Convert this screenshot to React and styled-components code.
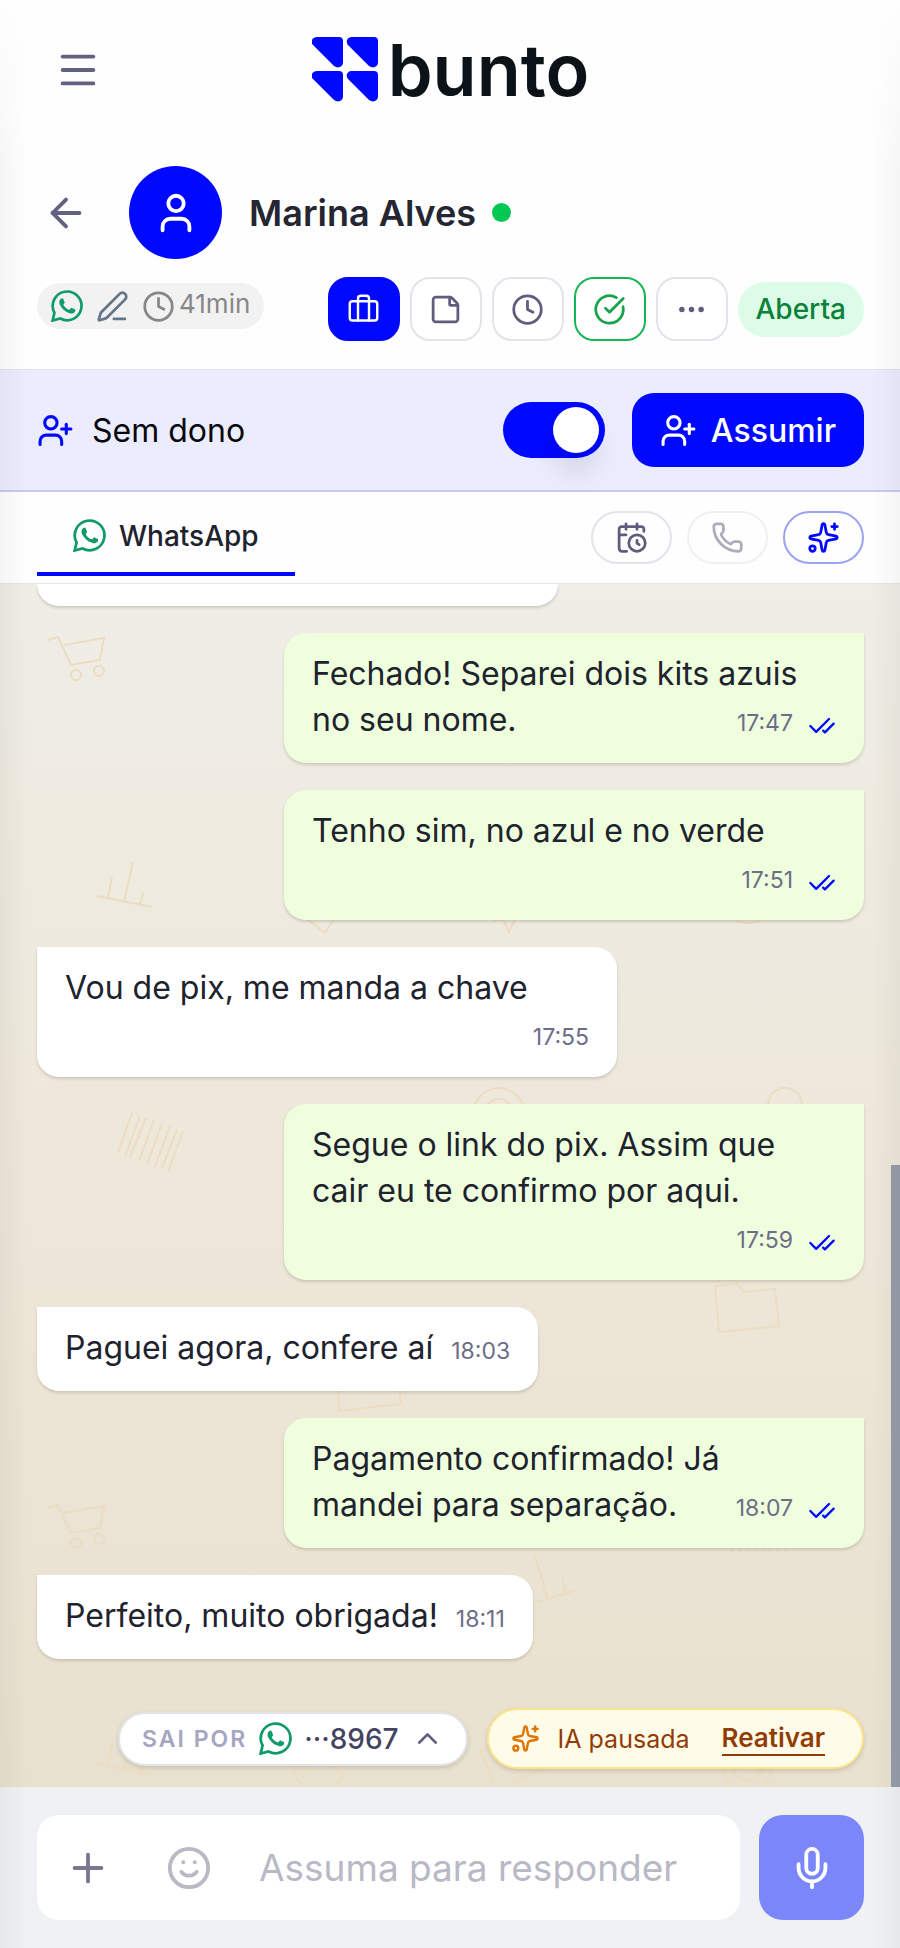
import React, { useState } from "react";
import styled, { createGlobalStyle } from "styled-components";
import {
  ArrowLeft,
  Briefcase,
  CalendarClock,
  CheckCheck,
  ChevronUp,
  CircleCheckBig,
  Clock,
  Ellipsis,
  Menu,
  Mic,
  PenLine,
  Phone,
  Plus,
  Smile,
  Sparkles,
  StickyNote,
  User,
  UserPlus,
} from "lucide-react";

const messages = [
  { id: 1, mine: true, text: "Fechado! Separei dois kits azuis no seu nome.", time: "17:47" },
  { id: 2, mine: true, text: "Tenho sim, no azul e no verde", time: "17:51" },
  { id: 3, mine: false, text: "Vou de pix, me manda a chave", time: "17:55" },
  { id: 4, mine: true, text: "Segue o link do pix. Assim que cair eu te confirmo por aqui.", time: "17:59" },
  { id: 5, mine: false, text: "Paguei agora, confere aí", time: "18:03" },
  { id: 6, mine: true, text: "Pagamento confirmado! Já mandei para separação.", time: "18:07" },
  { id: 7, mine: false, text: "Perfeito, muito obrigada!", time: "18:11" },
];

const WhatsAppIcon = ({ size = 32 }) => (
  <svg width={size} height={size} viewBox="0 0 24 24" fill="none" aria-hidden="true">
    <path
      d="M1.2 22.9 2.6 17.1A10.8 10.8 0 1 1 6.9 21.4Z"
      stroke="currentColor"
      strokeWidth="2"
    />
    <path
      fill="currentColor"
      transform="translate(0.2 0)"
      d="M17.472 14.382c-.297-.149-1.758-.867-2.03-.967-.273-.099-.471-.148-.67.15-.197.297-.767.966-.94 1.164-.173.199-.347.223-.644.075-.297-.15-1.255-.463-2.39-1.475-.883-.788-1.48-1.761-1.653-2.059-.173-.297-.018-.458.13-.606.134-.133.298-.347.446-.52.149-.174.198-.298.298-.497.099-.198.05-.371-.025-.52-.075-.149-.669-1.612-.916-2.207-.242-.579-.487-.5-.669-.51-.173-.008-.371-.01-.57-.01-.198 0-.52.074-.792.372-.272.297-1.04 1.016-1.04 2.479 0 1.462 1.065 2.875 1.213 3.074.149.198 2.096 3.2 5.077 4.487.709.306 1.262.489 1.694.625.712.227 1.36.195 1.871.118.571-.085 1.758-.719 2.006-1.413.248-.694.248-1.289.173-1.413-.074-.124-.272-.198-.57-.347"
    />
  </svg>
);

const LogoMark = () => {
  const leaf =
    "M5 0H27a4 4 0 0 1 4 4V25c0 5-5 7-9 4L1.5 8.5C-2 5 0 0 5 0Z";
  return (
    <svg width="66" height="65" viewBox="0 0 66 65" fill="#0008ff" aria-hidden="true">
      <path d={leaf} />
      <path d={leaf} transform="translate(35 0)" />
      <path d={leaf} transform="translate(0 34)" />
      <path d={leaf} transform="translate(35 34)" />
    </svg>
  );
};

const Cart = ({ y }) => (
  <g transform={`translate(0 ${y})`}>
    <path d="M48 56 58 53 71 81 100 76 104 54 64 61" />
    <circle cx="76" cy="91" r="5" />
    <circle cx="99" cy="87" r="5" />
  </g>
);

const Bars = ({ y }) => (
  <path
    transform={`translate(0 ${y})`}
    d="M97 312 152 323M112 293 108 314M133 278 124 318M144 308 140 320"
  />
);

const Doodles = () => (
  <Pattern viewBox="0 0 900 1203" preserveAspectRatio="xMidYMin slice" aria-hidden="true">
    <Cart y={0} />
    <Cart y={868} />
    <Bars y={0} />
    <Bars y={868} />
    <path d="M307 335 325 349 334 335M493 336 503 336 509 348 515 335" />
    <circle cx="748" cy="314" r="25" />
    <path d="M132 529 118 569M140 532 125 572M146 534 130 573M154 536 139 577M162 540 147 580M170 542 155 583M177 545 162 584M183 547 168 588" />
    <circle cx="499" cy="529" r="25" />
    <circle cx="499" cy="529" r="14" />
    <circle cx="785" cy="521" r="17" />
    <path d="M715 702 737 700 744 708 775 705 779 742 719 748Z" />
    <path d="M338 800 339 827 401 820 399 800" />
    <path d="M732 960v8M740 960v8M747 960v8M755 960v8M763 960v8M770 960v8M778 960v8M786 960v8" />
    <path d="M535 972 548 1015M538 1018 577 1006M562 994 566 1009" />
    <path d="M293 1182 297 1196 306 1203M331 1180 343 1190 335 1203" />
    <circle cx="305" cy="1184" r="4" />
    <path d="M495 1203 480 1167 500 1160M548 1184 518 1195 513 1203" />
    <circle cx="747" cy="1181" r="25" />
    <circle cx="747" cy="1181" r="15" />
  </Pattern>
);

const Message = ({ mine, text, time }) => (
  <Bubble $mine={mine}>
    {text}
    <Stamp>
      <time>{time}</time>
      {mine && <CheckCheck size={28} strokeWidth={2} />}
    </Stamp>
  </Bubble>
);

const App = () => {
  const [unowned, setUnowned] = useState(true);

  return (
    <Page>
      <GlobalStyle />
      <TopBar>
        <IconButton $width="82px" aria-label="Menu">
          <Menu size={46} strokeWidth={2} />
        </IconButton>
        <Logo>
          <LogoMark />
          <span>bunto</span>
        </Logo>
      </TopBar>

      <ContactHeader>
        <ContactRow>
          <IconButton $width="57px" aria-label="Voltar">
            <ArrowLeft size={46} strokeWidth={2} />
          </IconButton>
          <Avatar>
            <User size={46} strokeWidth={2} />
          </Avatar>
          <Name>Marina Alves</Name>
          <OnlineDot />
        </ContactRow>
        <ToolRow>
          <MetaPill>
            <WhatsAppIcon size={32} />
            <PenLine size={33} strokeWidth={2} color="#64748b" />
            <Wait>
              <Clock size={33} strokeWidth={2} />
              <span>41min</span>
            </Wait>
          </MetaPill>
          <Tools>
            <ToolButton $tone="primary" aria-label="Negócio">
              <Briefcase size={33} strokeWidth={1.75} />
            </ToolButton>
            <ToolButton aria-label="Notas">
              <StickyNote size={33} strokeWidth={2} />
            </ToolButton>
            <ToolButton aria-label="Agendar">
              <Clock size={33} strokeWidth={2} />
            </ToolButton>
            <ToolButton $tone="success" aria-label="Resolver">
              <CircleCheckBig size={33} strokeWidth={2} />
            </ToolButton>
            <ToolButton aria-label="Mais">
              <Ellipsis size={33} strokeWidth={2} />
            </ToolButton>
            <Status>Aberta</Status>
          </Tools>
        </ToolRow>
      </ContactHeader>

      <OwnerBar>
        <OwnerLabel htmlFor="owner">
          <UserPlus size={37} strokeWidth={2} />
          <span>Sem dono</span>
        </OwnerLabel>
        <Toggle
          id="owner"
          type="checkbox"
          checked={unowned}
          onChange={(event) => setUnowned(event.target.checked)}
        />
        <AssumeButton>
          <UserPlus size={37} strokeWidth={2} />
          Assumir
        </AssumeButton>
      </OwnerBar>

      <Channels>
        <Tab>
          <WhatsAppIcon size={33} />
          <span>WhatsApp</span>
        </Tab>
        <ChannelActions>
          <RoundButton aria-label="Agenda">
            <CalendarClock size={33} strokeWidth={2} />
          </RoundButton>
          <RoundButton disabled aria-label="Ligar">
            <Phone size={33} strokeWidth={2} />
          </RoundButton>
          <RoundButton $accent aria-label="Assistente">
            <Sparkles size={33} strokeWidth={2} />
          </RoundButton>
        </ChannelActions>
      </Channels>

      <Chat>
        <Doodles />
        <List>
          <BubbleEnd />
          {messages.map((message) => (
            <Message key={message.id} {...message} />
          ))}
        </List>
        <Pills>
          <SenderPill>
            <small>SAI POR</small>
            <WhatsAppIcon size={33} />
            <span>···8967</span>
            <ChevronUp size={33} strokeWidth={2} />
          </SenderPill>
          <PausedPill>
            <Sparkles size={29} strokeWidth={2} />
            <span>IA pausada</span>
            <ResumeButton>Reativar</ResumeButton>
          </PausedPill>
        </Pills>
        <ScrollThumb />
      </Chat>

      <Composer>
        <Field>
          <IconButton $width="101px" $color="#77778f" aria-label="Anexar">
            <Plus size={46} strokeWidth={2} />
          </IconButton>
          <IconButton $width="101px" $color="#b9b9c6" aria-label="Emoji">
            <Smile size={46} strokeWidth={2} />
          </IconButton>
          <TextInput placeholder="Assuma para responder" aria-label="Mensagem" />
        </Field>
        <MicButton aria-label="Gravar áudio">
          <Mic size={46} strokeWidth={2} />
        </MicButton>
      </Composer>
    </Page>
  );
};

export default App;

const GlobalStyle = createGlobalStyle`
  * {
    box-sizing: border-box;
  }
  body {
    margin: 0;
    background: #fefefe;
    color: #20222d;
    font-family: Inter, "Liberation Sans", sans-serif;
  }
  button, input {
    font-family: inherit;
    margin: 0;
  }
  button {
    border: 0;
    padding: 0;
    background: none;
    cursor: pointer;
  }
  svg {
    flex: none;
  }
`;

const Page = styled.main`
  position: relative;
  display: flex;
  flex-direction: column;
  min-height: 100vh;

  /* soft shade along both side edges */
  &::after {
    content: "";
    position: absolute;
    inset: 0;
    pointer-events: none;
    background: linear-gradient(90deg, rgba(20, 20, 10, 0.04), transparent 28px),
      linear-gradient(270deg, rgba(20, 20, 10, 0.04), transparent 28px);
    mask-image: linear-gradient(transparent, #000 180px);
  }
`;

const TopBar = styled.header`
  display: grid;
  grid-template-columns: 1fr auto 1fr;
  align-items: center;
  height: 139px;
  padding: 0 36px 0 37px;
`;

const IconButton = styled.button`
  display: flex;
  flex: none;
  align-items: center;
  justify-content: center;
  width: ${({ $width }) => $width};
  color: ${({ $color }) => $color || "#626180"};
`;

const Logo = styled.div`
  display: flex;
  align-items: center;
  gap: 10px;
  color: #0c1318;
  font-size: 72px;
  font-weight: 600;
  line-height: 72px;
`;

const ContactHeader = styled.section`
  display: flex;
  flex-direction: column;
  gap: 18px;
  padding: 27px 36px 28px 37px;
  border-bottom: 1px solid #e2e3ea;
`;

const ContactRow = styled.div`
  display: flex;
  align-items: center;
`;

const Avatar = styled.div`
  display: flex;
  align-items: center;
  justify-content: center;
  width: 93px;
  height: 93px;
  margin: 0 27px 0 35px;
  border-radius: 50%;
  background: #0008ff;
  color: #fff;
`;

const Name = styled.h1`
  margin: 0;
  color: #262633;
  font-size: 36px;
  font-weight: 600;
  line-height: 46px;
`;

const OnlineDot = styled.span`
  width: 19px;
  height: 19px;
  margin-left: 16px;
  border-radius: 50%;
  background: #00c853;
`;

const ToolRow = styled.div`
  display: flex;
  align-items: center;
  justify-content: space-between;
`;

const MetaPill = styled.div`
  display: flex;
  align-items: center;
  gap: 13px;
  height: 46px;
  margin-bottom: 6px;
  padding: 0 14px;
  border-radius: 23px;
  background: #f2f2f2;
  color: #0f9b68;
`;

const Wait = styled.span`
  display: flex;
  align-items: flex-start;
  gap: 4px;
  color: #878787;
  font-size: 26px;
  line-height: 28px;
`;

const Tools = styled.div`
  display: flex;
  align-items: center;
  gap: 10px;
`;

const tones = {
  primary: { line: "#0008ff", fill: "#0008ff", ink: "#fff" },
  success: { line: "#16b657", fill: "#fff", ink: "#16a34a" },
  neutral: { line: "#e3e4ea", fill: "#fff", ink: "#5f5d7d" },
};

const ToolButton = styled.button`
  display: flex;
  align-items: center;
  justify-content: center;
  width: 72px;
  height: 64px;
  border: 2px solid ${({ $tone = "neutral" }) => tones[$tone].line};
  border-radius: 20px;
  background: ${({ $tone = "neutral" }) => tones[$tone].fill};
  color: ${({ $tone = "neutral" }) => tones[$tone].ink};
`;

const Status = styled.span`
  padding: 0 18px;
  border-radius: 28px;
  background: #dcfce7;
  color: #0b8139;
  font-size: 28px;
  font-weight: 500;
  line-height: 55px;
`;

const OwnerBar = styled.section`
  display: flex;
  align-items: center;
  padding: 23px 36px 23px 37px;
  border-bottom: 2px solid #c6cbf3;
  background: #ebedfe;
`;

const OwnerLabel = styled.label`
  display: flex;
  align-items: center;
  gap: 18px;
  margin-right: auto;
  color: #0008ff;
  font-size: 32px;

  span {
    color: #08080c;
  }
`;

const Toggle = styled.input`
  appearance: none;
  width: 102px;
  height: 56px;
  padding: 5px 6px;
  border-radius: 28px;
  background: #b9bccf;
  cursor: pointer;

  &::before {
    content: "";
    display: block;
    width: 46px;
    height: 46px;
    border-radius: 50%;
    background: #fff;
    box-shadow: 0 20px 28px rgba(0, 0, 40, 0.1);
  }
  &:checked {
    background: #0008ff;
  }
  &:checked::before {
    margin-left: auto;
  }
`;

const AssumeButton = styled.button`
  display: flex;
  align-items: center;
  gap: 14px;
  height: 74px;
  margin-left: 27px;
  padding: 0 28px;
  border-radius: 22px;
  background: #0008ff;
  color: #fff;
  font-size: 32px;
  font-weight: 500;
`;

const Channels = styled.nav`
  display: flex;
  align-items: center;
  justify-content: space-between;
  padding: 7px 36px 7px 37px;
  border-bottom: 1px solid #e6e6ec;
  background: #fefefe;
`;

const Tab = styled.button`
  display: flex;
  align-items: center;
  gap: 13px;
  height: 77px;
  padding: 0 36px;
  border-bottom: 4px solid #0008ff;
  color: #0f9b68;
  font-size: 28px;
  font-weight: 500;

  span {
    color: #20222d;
  }
`;

const ChannelActions = styled.div`
  display: flex;
  gap: 15px;
`;

const RoundButton = styled.button`
  display: flex;
  align-items: center;
  justify-content: center;
  width: 81px;
  height: 53px;
  border: 2px solid ${({ $accent }) => ($accent ? "#9ba3f2" : "#e3e4ea")};
  border-radius: 27px;
  color: ${({ $accent }) => ($accent ? "#0008ff" : "#5f5d7d")};

  &:disabled {
    opacity: 0.5;
  }
`;

const Chat = styled.section`
  position: relative;
  flex: 1;
  display: flex;
  flex-direction: column;
  background: linear-gradient(#efede6, #eee8db 45%, #e9e1cf);
`;

const Pattern = styled.svg`
  position: absolute;
  inset: 0;
  width: 100%;
  height: 100%;
  fill: none;
  stroke: #ebdcc2;
  stroke-width: 2;
`;

const List = styled.div`
  position: relative;
  display: flex;
  flex-direction: column;
  align-items: flex-start;
  gap: 27px;
  padding: 0 36px 0 37px;
`;

const Bubble = styled.article`
  display: flow-root;
  align-self: ${({ $mine }) => ($mine ? "flex-end" : "flex-start")};
  max-width: 580px;
  padding: 18px 28px 20px;
  border-radius: ${({ $mine }) => ($mine ? "22px 0 22px 22px" : "0 22px 22px 22px")};
  background: ${({ $mine }) => ($mine ? "#efffde" : "#fff")};
  box-shadow: 0 2px 3px rgba(60, 50, 20, 0.18);
  font-size: 32px;
  line-height: 46px;
`;

/* tail of the previous message, scrolled under the tabs */
const BubbleEnd = styled.div`
  width: 63%;
  height: 22px;
  border-radius: 0 0 22px 22px;
  background: #fff;
  box-shadow: 0 2px 3px rgba(60, 50, 20, 0.18);
`;

const Stamp = styled.span`
  float: right;
  display: flex;
  align-items: center;
  gap: 15px;
  margin-left: 18px;
  padding-top: 6px;
  color: #6d6d88;
  font-size: 23px;
  line-height: 40px;

  svg {
    margin-top: 6px;
    color: #0008ff;
  }
`;

const Pills = styled.div`
  position: relative;
  display: flex;
  align-items: center;
  justify-content: flex-end;
  gap: 19px;
  margin-top: auto;
  padding: 49px 36px 18px;
`;

const SenderPill = styled.button`
  display: flex;
  align-items: center;
  gap: 12px;
  height: 54px;
  padding: 0 22px;
  border: 2px solid #e3e4ea;
  border-radius: 27px;
  background: #fff;
  box-shadow: 0 2px 4px rgba(60, 50, 20, 0.18);
  color: #0f9b68;

  small {
    color: #a6a6c2;
    font-size: 23px;
    font-weight: 600;
    letter-spacing: 2px;
  }
  span {
    color: #45445f;
    font-size: 28px;
    font-weight: 500;
  }
  svg:last-child {
    color: #5f5d7d;
  }
`;

const PausedPill = styled.div`
  display: flex;
  align-items: center;
  height: 61px;
  padding: 0 37px 0 22px;
  border: 2px solid #fbe38a;
  border-radius: 31px;
  background: #fffbe9;
  box-shadow: 0 2px 4px rgba(60, 50, 20, 0.18);
  color: #e07400;
  font-size: 25px;

  span {
    margin: 0 32px 0 18px;
    color: #923c04;
  }
`;

const ResumeButton = styled.button`
  border-bottom: 2px solid #923c04;
  color: #923c04;
  font-size: 26px;
  font-weight: 600;
  line-height: 32px;
`;

const ScrollThumb = styled.div`
  position: absolute;
  right: 0;
  bottom: 0;
  width: 9px;
  height: 622px;
  background: #969daa;
`;

const Composer = styled.footer`
  display: flex;
  gap: 19px;
  padding: 28px 36px 28px 37px;
  background: #eff1f5;
`;

const Field = styled.div`
  flex: 1;
  min-width: 0;
  display: flex;
  align-items: center;
  height: 105px;
  border-radius: 22px;
  background: #fff;
`;

const TextInput = styled.input`
  flex: 1;
  min-width: 0;
  height: 100%;
  padding: 0 20px;
  border: 0;
  outline: 0;
  background: none;
  font-size: 37px;

  &::placeholder {
    color: #b9b9c6;
    opacity: 1;
  }
`;

const MicButton = styled.button`
  display: flex;
  flex: none;
  align-items: center;
  justify-content: center;
  width: 105px;
  height: 105px;
  border-radius: 24px;
  background: #7a86f9;
  color: #fff;
`;
